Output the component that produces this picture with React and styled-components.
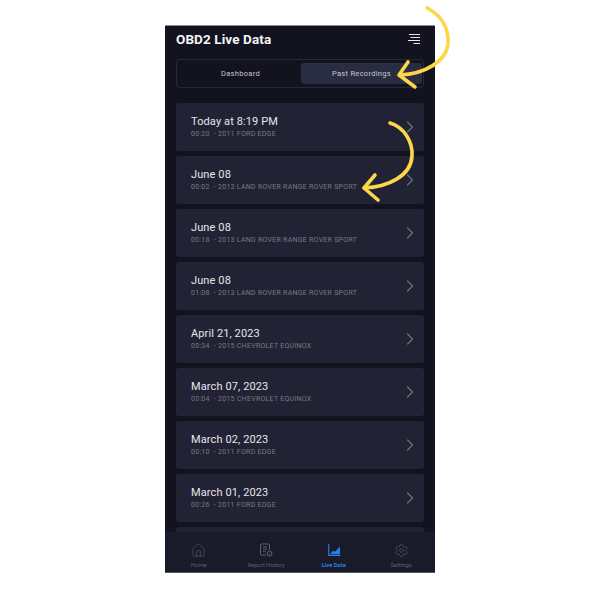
import styled, { createGlobalStyle } from "styled-components";
import { ChevronRight, House, Settings } from "lucide-react";

const GlobalStyle = createGlobalStyle`
  html, body {
    margin: 0;
    background: #fff;
    font-family: "Roboto", "Liberation Sans", sans-serif;
  }
`;

const Page = styled.div`
  position: relative;
  width: 600px;
  height: 600px;
  overflow: hidden;
  display: flex;
  justify-content: center;
  padding-top: 25px;
  box-sizing: border-box;
`;

const Phone = styled.div`
  width: 270px;
  height: 548px;
  box-sizing: border-box;
  background: #13131f;
  border-top: 1px solid #8d8d96;
  border-bottom: 1px solid #55555c;
  display: flex;
  flex-direction: column;
  overflow: hidden;
`;

const Header = styled.div`
  height: 33px;
  flex: none;
  box-sizing: border-box;
  padding: 0 15px 7px 11px;
  display: flex;
  align-items: center;
  justify-content: space-between;
`;

const Title = styled.h1`
  margin: 0;
  font-size: 13.5px;
  font-weight: 700;
  letter-spacing: 0.1px;
  color: #f4f4f6;
`;

const Tabs = styled.div`
  flex: none;
  margin: 0 11px;
  height: 29px;
  box-sizing: border-box;
  border: 1px solid #262835;
  border-radius: 4px;
  padding: 3px 1px 3px 3px;
  display: grid;
  grid-template-columns: 1fr 1fr;
`;

const Tab = styled.div`
  display: flex;
  align-items: center;
  justify-content: center;
  font-size: 7.5px;
  letter-spacing: 0.3px;
  border-radius: 3px;
  color: #c6c7cf;
  background: ${(p) => (p.$active ? "#2a2d42" : "transparent")};
`;

const List = styled.div`
  flex: 1;
  min-height: 0;
  overflow: hidden;
  padding: 15px 11px 0;
  display: flex;
  flex-direction: column;
  gap: 5px;
`;

const Card = styled.div`
  flex: none;
  height: 48px;
  box-sizing: border-box;
  background: #212335;
  border-radius: 3px;
  padding: 0 4px 0 15px;
  display: flex;
  align-items: center;
  justify-content: space-between;
`;

const CardText = styled.div`
  display: flex;
  flex-direction: column;
  gap: 2px;
  padding-bottom: 2px;
`;

const CardTitle = styled.div`
  font-size: 11px;
  line-height: 13px;
  letter-spacing: 0.12px;
  color: #e6e6ec;
`;

const CardMeta = styled.div`
  font-size: 7px;
  line-height: 8px;
  letter-spacing: 0.27px;
  color: #777985;
  white-space: pre;
`;

const Chevron = styled(ChevronRight)`
  color: #6d6f7c;
`;

const Nav = styled.div`
  flex: none;
  height: 40px;
  background: #191a2a;
  display: grid;
  grid-template-columns: repeat(4, 1fr);
`;

const NavItem = styled.div`
  display: flex;
  flex-direction: column;
  align-items: center;
  justify-content: flex-end;
  gap: 5px;
  padding-bottom: 3px;
  color: ${(p) => (p.$active ? "#2c7fe0" : "#5f616d")};
`;

const NavLabel = styled.span`
  font-size: 5.8px;
  line-height: 7px;
  font-weight: ${(p) => (p.$active ? 700 : 400)};
`;

const IconSlot = styled.div`
  height: 14px;
  display: flex;
  align-items: center;
  justify-content: center;
`;

const Arrows = styled.svg`
  position: absolute;
  inset: 0;
  pointer-events: none;
`;

const recordings = [
  ["Today at 8:19 PM", "00:20  - 2011 FORD EDGE"],
  ["June 08", "00:02  - 2013 LAND ROVER RANGE ROVER SPORT"],
  ["June 08", "00:18  - 2013 LAND ROVER RANGE ROVER SPORT"],
  ["June 08", "01:08  - 2013 LAND ROVER RANGE ROVER SPORT"],
  ["April 21, 2023", "00:34  - 2015 CHEVROLET EQUINOX"],
  ["March 07, 2023", "00:04  - 2015 CHEVROLET EQUINOX"],
  ["March 02, 2023", "00:10  - 2011 FORD EDGE"],
  ["March 01, 2023", "00:26  - 2011 FORD EDGE"],
  ["", ""],
];

const MenuIcon = () => (
  <svg width="12" height="12" viewBox="0 0 12 12" fill="none" stroke="#e8e8ec" strokeWidth="1">
    <path d="M1 1.5H12M2.5 4.5H12M0 7.5H12M5.5 10.5H12" />
  </svg>
);

const ReportIcon = () => (
  <svg width="14" height="14" viewBox="0 0 14 14" fill="none" stroke="currentColor" strokeWidth="1">
    <path d="M7 12H2.5A1 1 0 0 1 1.5 11V2A1 1 0 0 1 2.5 1H9.5A1 1 0 0 1 10.5 2V7" />
    <path d="M4 4H8M4 6.3H8M4 8.6H6.5" />
    <circle cx="10.6" cy="10.6" r="2.4" />
    <path d="M9.8 10.6L10.4 11.2L11.4 10.1" />
  </svg>
);

const ChartIcon = () => (
  <svg width="14" height="14" viewBox="0 0 14 14" fill="none">
    <path d="M1.7 1V12.4H13.4" stroke="currentColor" strokeWidth="1.1" />
    <path d="M3 11.2L6.2 7.4L8 8.8L13 3.5V11.2Z" fill="currentColor" />
  </svg>
);

const App = () => {
  return (
    <Page>
      <GlobalStyle />
      <Phone>
        <Header>
          <Title>OBD2 Live Data</Title>
          <MenuIcon />
        </Header>
        <Tabs>
          <Tab>Dashboard</Tab>
          <Tab $active>Past Recordings</Tab>
        </Tabs>
        <List>
          {recordings.map(([title, meta], i) => (
            <Card key={i}>
              <CardText>
                <CardTitle>{title}</CardTitle>
                <CardMeta>{meta}</CardMeta>
              </CardText>
              <Chevron size={20} strokeWidth={1.4} />
            </Card>
          ))}
        </List>
        <Nav>
          <NavItem>
            <IconSlot><House size={15} strokeWidth={1} /></IconSlot>
            <NavLabel>Home</NavLabel>
          </NavItem>
          <NavItem>
            <IconSlot><ReportIcon /></IconSlot>
            <NavLabel>Report History</NavLabel>
          </NavItem>
          <NavItem $active>
            <IconSlot><ChartIcon /></IconSlot>
            <NavLabel $active>Live Data</NavLabel>
          </NavItem>
          <NavItem>
            <IconSlot><Settings size={15} strokeWidth={1} /></IconSlot>
            <NavLabel>Settings</NavLabel>
          </NavItem>
        </Nav>
      </Phone>
      <Arrows width="600" height="600" viewBox="0 0 600 600" fill="none" stroke="#fdd74b" strokeWidth="3.6" strokeLinecap="round" strokeLinejoin="round">
        <path d="M427 8C443 16 449 30 448 44C446 62 424 74 400 75" />
        <path d="M408 62L399 75L415 87" />
        <path d="M390 123C404 127 413 142 412 156C411 176 388 187 364 188" />
        <path d="M375 175L364 188L378 200" />
      </Arrows>
    </Page>
  );
};

export default App;
